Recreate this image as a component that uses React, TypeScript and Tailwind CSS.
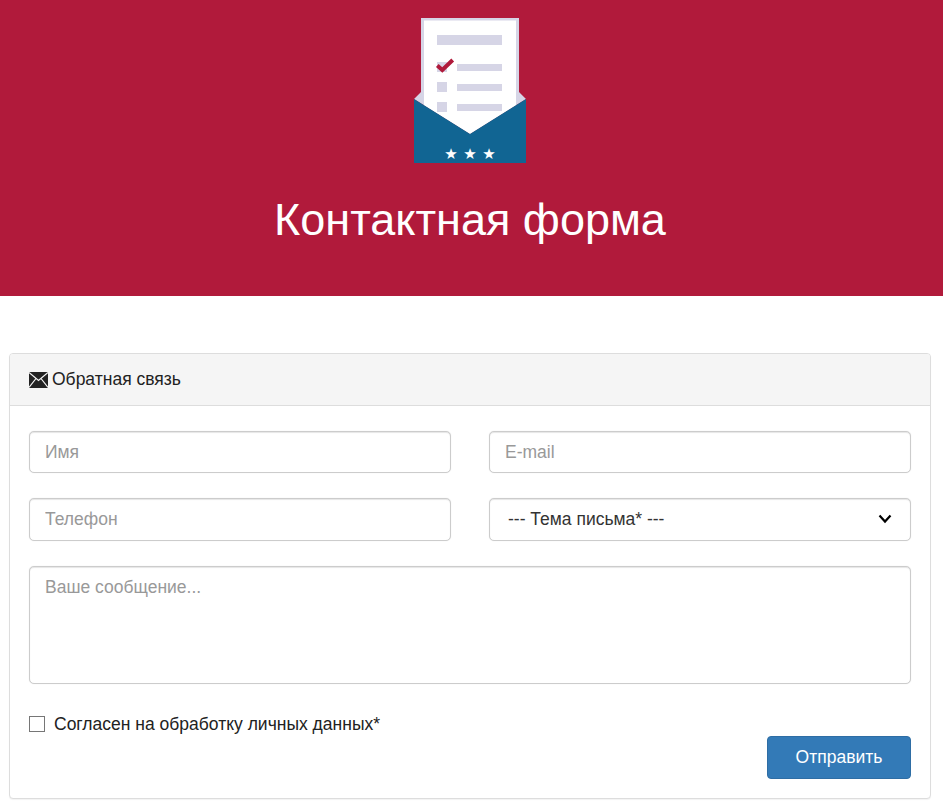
import React from "react";

const field =
  "w-full rounded-[5px] border border-[#ccc] bg-white px-[15px] text-[17.5px] text-[#333] shadow-[inset_0_1px_1px_rgba(0,0,0,0.1),0_0_1px_rgba(0,0,0,0.15)] outline-none placeholder:text-[#999]";

function Logo() {
  const star = "'DejaVu Sans', sans-serif";
  return (
    <svg width="112" height="145" viewBox="0 0 112 145" className="block">
      <polygon points="0,81 7,74 7,0 105,0 105,74 112,81 56,116" fill="#d6d5e6" />
      <polygon points="10,2.5 102,2.5 102,87.25 56,116 10,87.25" fill="#ffffff" />
      <rect x="23" y="17" width="65" height="10" fill="#d6d5e6" />
      <rect x="23" y="44" width="10" height="10" fill="#d6d5e6" />
      <rect x="43" y="46" width="45" height="7" fill="#d6d5e6" />
      <rect x="23" y="64" width="10" height="10" fill="#d6d5e6" />
      <rect x="43" y="66" width="45" height="7" fill="#d6d5e6" />
      <rect x="23" y="84" width="10" height="10" fill="#d6d5e6" />
      <rect x="43" y="86" width="45" height="7" fill="#d6d5e6" />
      <path d="M23.3 47.5 L28.3 52 L38.7 42" fill="none" stroke="#b01a3b" strokeWidth="4" />
      <polygon points="0,81 56,116 112,81 112,145 0,145" fill="#116593" />
      <text x="37" y="141" fontSize="15" fill="#ffffff" textAnchor="middle" fontFamily={star}>★</text>
      <text x="56" y="141" fontSize="15" fill="#ffffff" textAnchor="middle" fontFamily={star}>★</text>
      <text x="75" y="141" fontSize="15" fill="#ffffff" textAnchor="middle" fontFamily={star}>★</text>
    </svg>
  );
}

export default function App() {
  return (
    <div className="min-h-[808px] bg-white font-['Liberation_Sans',Arial,sans-serif] text-[17.5px] text-[#333]">
      <header className="h-[296px] bg-[#b11a3b] pt-[18px] text-white">
        <div className="flex w-[940px] flex-col items-center">
          <Logo />
          <h1 className="mt-[29px] text-[45px] leading-[56px] font-normal">Контактная форма</h1>
        </div>
      </header>

      <section className="mt-[57px] ml-[9px] h-[446px] w-[922px] rounded-[4px] border border-[#ddd] bg-white shadow-[0_1px_1px_rgba(0,0,0,0.05)]">
        <div className="flex h-[52px] items-center gap-[4px] rounded-t-[3px] border-b border-[#ddd] bg-[#f5f5f5] pl-[19px]">
          <svg width="19" height="16" viewBox="0 0 19 16" className="block">
            <rect x="0" y="0" width="19" height="16" fill="#222" />
            <path d="M0 0.5 L9.5 8.5 L19 0.5 M0 15.5 L7 6.5 M19 15.5 L12 6.5" fill="none" stroke="#f5f5f5" strokeWidth="1.2" />
          </svg>
          <span className="text-[#222]">Обратная связь</span>
        </div>

        <form className="px-[19px] pt-[25px]">
          <div className="grid grid-cols-2 gap-x-[38px] gap-y-[25px]">
            <input className={`${field} h-[42px]`} placeholder="Имя" />
            <input className={`${field} h-[42px]`} placeholder="E-mail" />
            <input className={`${field} h-[43px]`} placeholder="Телефон" />
            <div className="relative">
              <div className={`${field} flex h-[43px] items-center pl-[18px]`}>--- Тема письма* ---</div>
              <svg width="14" height="10" viewBox="0 0 14 10" className="absolute top-[16px] right-[19px]">
                <path d="M1.5 1.5 L7 7.5 L12.5 1.5" fill="none" stroke="#000" strokeWidth="2.2" />
              </svg>
            </div>
          </div>
          <textarea
            className={`${field} mt-[25px] block h-[118px] resize-none py-[9px] leading-[22px]`}
            placeholder="Ваше сообщение..."
          />
          <label className="mt-[29px] flex h-[22px] items-center">
            <span className="h-[16px] w-[16px] border border-[#767676] bg-white" />
            <span className="ml-[9px] text-[#222]">Согласен на обработку личных данных*</span>
          </label>
          <div className="flex justify-end">
            <button
              type="button"
              className="mt-[1px] h-[43px] w-[144px] rounded-[4px] border border-[#2e6da4] bg-[#337ab7] text-[17.5px] text-white"
            >
              Отправить
            </button>
          </div>
        </form>
      </section>
    </div>
  );
}
